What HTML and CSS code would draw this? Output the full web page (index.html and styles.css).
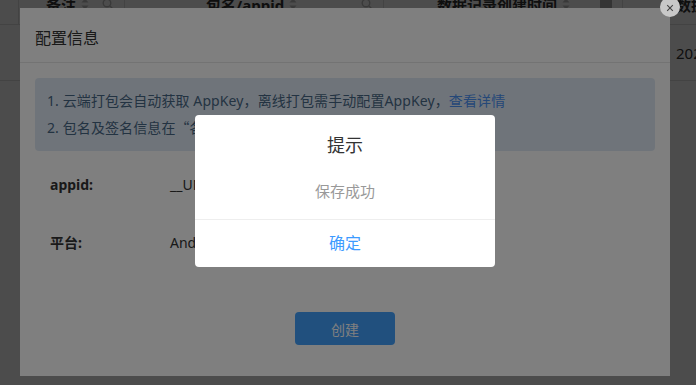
FILE: index.html
```html
<!DOCTYPE html>
<html lang="zh-CN">
<head>
  <meta charset="UTF-8">
  <title>配置信息</title>
  <link rel="stylesheet" href="styles.css">
</head>
<body>

  <!-- 表格（被遮住的背景页） -->
  <div class="page">
    <div class="grid-head">
      <div class="cell cell-check"></div>
      <div class="cell cell-note">
        <span>备注</span>
        <svg class="sort" viewBox="0 0 8 12"><path d="M4 0.5 7.5 4.5H0.5Z M4 11.5 7.5 7.5H0.5Z"/></svg>
        <svg class="search" viewBox="0 0 12 12"><circle cx="5" cy="5" r="3.8"/><path d="M8 8 11.2 11.2"/></svg>
      </div>
      <div class="cell cell-app">
        <span>包名/appid</span>
        <svg class="sort" viewBox="0 0 8 12"><path d="M4 0.5 7.5 4.5H0.5Z M4 11.5 7.5 7.5H0.5Z"/></svg>
        <svg class="search" viewBox="0 0 12 12"><circle cx="5" cy="5" r="3.8"/><path d="M8 8 11.2 11.2"/></svg>
      </div>
      <div class="cell cell-time">
        <span>数据记录创建时间</span>
        <svg class="sort" viewBox="0 0 8 12"><path d="M4 0.5 7.5 4.5H0.5Z M4 11.5 7.5 7.5H0.5Z"/></svg>
        <i class="filter"></i>
      </div>
      <div class="cell cell-data"><span>数据更新时间</span></div>
    </div>
    <div class="grid-row">
      <div class="cell cell-check"></div>
      <div class="cell cell-note"></div>
      <div class="cell cell-app"></div>
      <div class="cell cell-time"></div>
      <div class="cell cell-data">2024-03-18 10:22:41</div>
    </div>
  </div>

  <div class="mask"></div>

  <!-- 配置信息弹窗 -->
  <div class="popup">
    <div class="popup-head">配置信息</div>
    <div class="popup-body">
      <div class="tips">
        <div>1. 云端打包会自动获取 AppKey，离线打包需手动配置AppKey，<a href="#">查看详情</a></div>
        <div>2. 包名及签名信息在<span class="cjk">“</span>各平台打包配置<span class="cjk">”</span>中设置</div>
      </div>
      <div class="form">
        <div class="form-row">
          <span class="form-label">appid:</span>
          <span>__UNI__A8F3C21</span>
        </div>
        <div class="form-row">
          <span class="form-label">平台:</span>
          <span>Android</span>
        </div>
      </div>
      <div class="form-actions">
        <button class="btn-create">创建</button>
      </div>
    </div>
  </div>

  <div class="mask mask-dark"></div>

  <!-- 提示框 -->
  <div class="modal">
    <div class="modal-title">提示</div>
    <div class="modal-content">保存成功</div>
    <div class="modal-foot">确定</div>
  </div>

  <div class="close-btn">
    <svg viewBox="0 0 10 10"><path d="M1.5 1.5 8.5 8.5M8.5 1.5 1.5 8.5"/></svg>
  </div>

</body>
</html>
```

FILE: styles.css
```css
body {
  margin: 0;
  width: 696px;
  height: 385px;
  overflow: hidden;
  background: #fff;
  font-family: "Noto Sans", "Noto Sans CJK SC", sans-serif;
  color: #333;
}

.cjk {
  font-family: "Noto Sans CJK SC", sans-serif;
}

/* 背景表格 */
.grid-head,
.grid-row {
  display: flex;
  border-bottom: 1px solid #e2e2e2;
}

.grid-head {
  height: 40px;
  margin-top: -16px;
  font-size: 15px;
  font-weight: bold;
  color: #333;
}

.grid-row {
  height: 55px;
  font-size: 15px;
}

.cell {
  flex-shrink: 0;
  display: flex;
  align-items: center;
  box-sizing: border-box;
  border-right: 1px solid #e2e2e2;
  padding-right: 10px;
  white-space: nowrap;
  overflow: hidden;
}

.grid-row .cell {
  border-right: none;
}

.cell-check { width: 19px; padding-right: 0; }
.cell-note { width: 106px; padding-left: 27px; }
.cell-app { width: 259px; padding-left: 81px; }
.cell-time { width: 239px; padding-left: 53px; }
.cell-data { flex: 1; padding-left: 53px; border-right: none; }

.sort {
  width: 8px;
  height: 12px;
  margin-left: 5px;
  fill: #c0c0c0;
}

.search {
  width: 12px;
  height: 12px;
  margin-left: auto;
  fill: none;
  stroke: #c0c0c0;
  stroke-width: 1.4;
}

.filter {
  width: 12px;
  height: 12px;
  margin-left: auto;
  border-radius: 2px;
  background: #b0b0b0;
}

/* 遮罩 */
.mask {
  position: fixed;
  top: 0;
  left: 0;
  right: 0;
  bottom: 0;
  background: rgba(0, 0, 0, 0.4);
  z-index: 1;
}

.mask-dark {
  background: rgba(0, 0, 0, 0.5);
  z-index: 3;
}

/* 配置信息弹窗 */
.popup {
  position: absolute;
  left: 20px;
  top: 8px;
  width: 650px;
  height: 368px;
  background: #fff;
  z-index: 2;
}

.popup-head {
  height: 51px;
  padding: 3px 15px 0;
  border-bottom: 1px solid #e6e6e6;
  display: flex;
  align-items: center;
  font-size: 16px;
  color: #333;
}

.popup-body {
  padding: 15px 15px 0;
}

.tips {
  background: #dfe9f5;
  border-radius: 4px;
  padding: 10px 12px;
  font-size: 14px;
  line-height: 26px;
  color: #476684;
  letter-spacing: 0.1px;
}

.tips a {
  color: #4a90f0;
  text-decoration: none;
}

.form {
  margin-top: 4px;
}

.form-row {
  display: flex;
  align-items: center;
  height: 58px;
  padding-left: 15px;
  font-size: 14px;
  color: #333;
}

.form-label {
  width: 120px;
  font-weight: bold;
}

.form-actions {
  display: flex;
  justify-content: center;
  margin-top: 41px;
}

.btn-create {
  width: 100px;
  height: 33px;
  border: none;
  border-radius: 4px;
  background: #42a0fd;
  color: #fff;
  font-size: 14px;
  font-family: inherit;
}

/* 提示框 */
.modal {
  position: fixed;
  left: 195px;
  top: 115px;
  width: 300px;
  background: #fff;
  border-radius: 4px;
  text-align: center;
  z-index: 4;
}

.modal-title {
  padding-top: 20px;
  line-height: 20px;
  font-size: 18px;
  color: #333;
}

.modal-content {
  padding: 25px 15px 17px;
  line-height: 22px;
  font-size: 15px;
  color: #999;
}

.modal-foot {
  border-top: 1px solid #eee;
  line-height: 47px;
  font-size: 16px;
  color: #3d9bff;
}

.close-btn {
  position: fixed;
  left: 660px;
  top: -3px;
  width: 20px;
  height: 20px;
  border-radius: 50%;
  background: #c8c8c8;
  display: flex;
  align-items: center;
  justify-content: center;
  z-index: 5;
}

.close-btn svg {
  width: 8px;
  height: 8px;
  margin-top: 1px;
  fill: none;
  stroke: #444;
  stroke-width: 1.4;
}
```
